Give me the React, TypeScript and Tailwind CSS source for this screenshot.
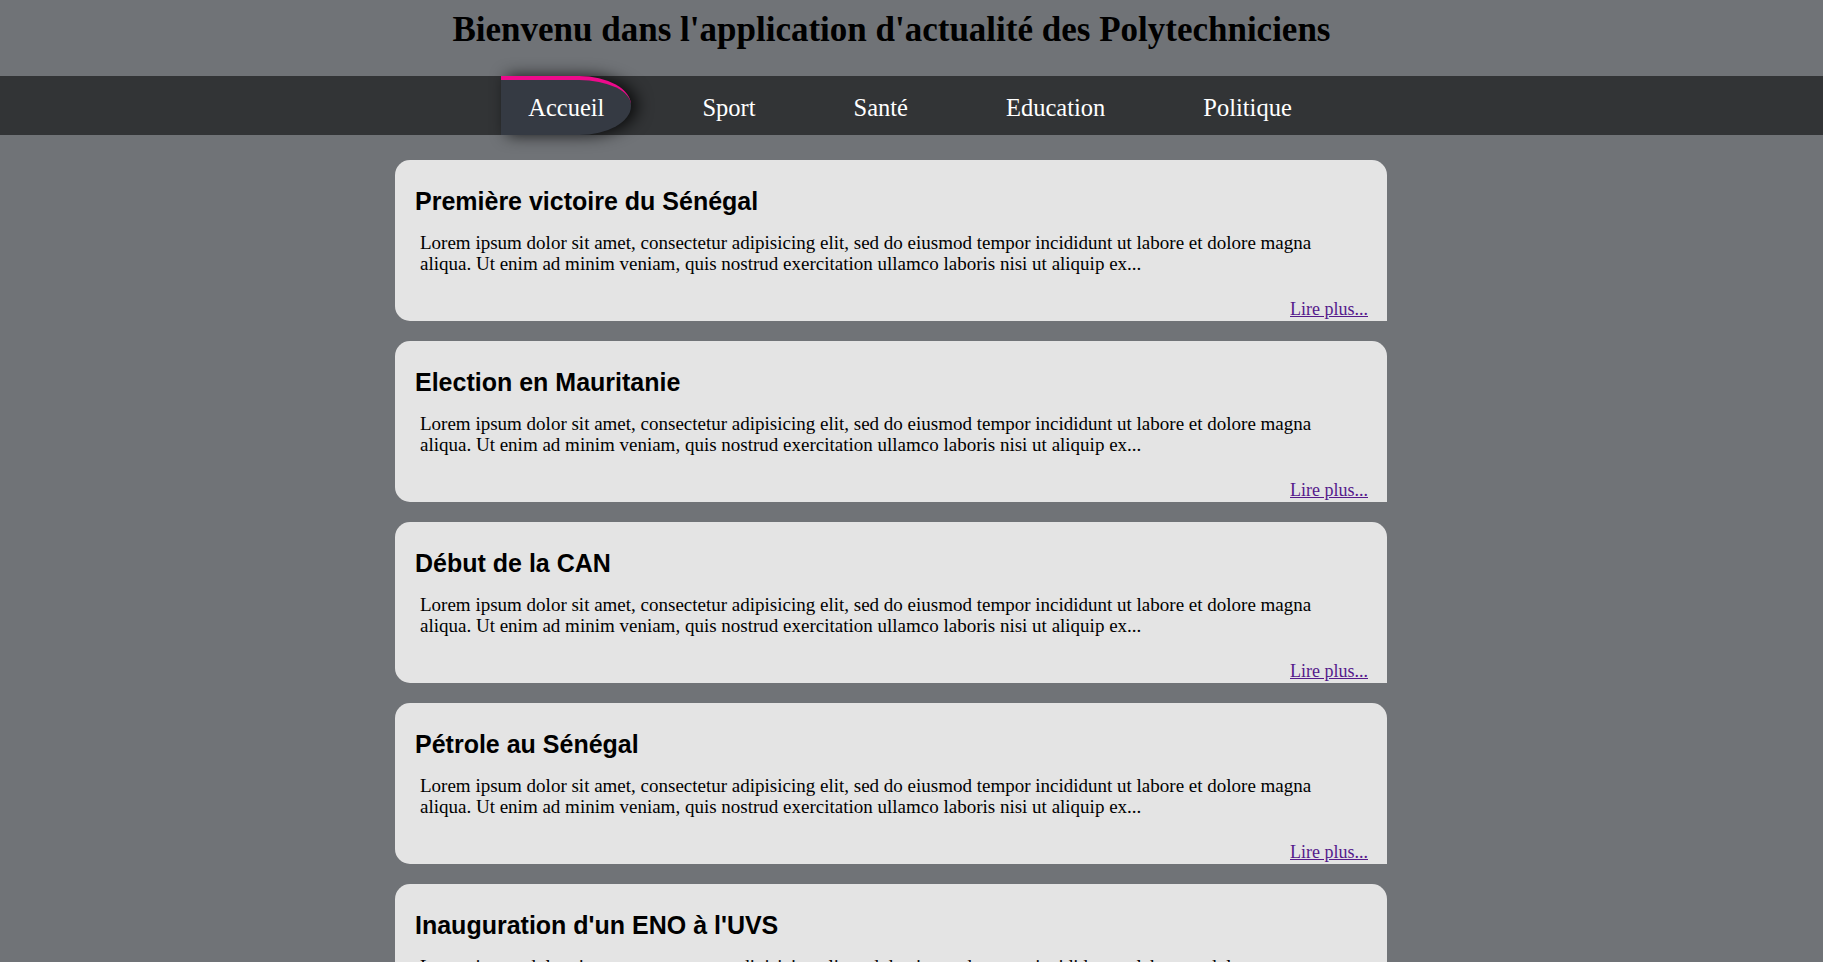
const articles = [
  { title: "Première victoire du Sénégal" },
  { title: "Election en Mauritanie" },
  { title: "Début de la CAN" },
  { title: "Pétrole au Sénégal" },
  { title: "Inauguration d'un ENO à l'UVS" },
  { title: "Rentrée universitaire à l'ESP" },
]

const lorem =
  "Lorem ipsum dolor sit amet, consectetur adipisicing elit, sed do eiusmod tempor incididunt ut labore et dolore magna aliqua. Ut enim ad minim veniam, quis nostrud exercitation ullamco laboris nisi ut aliquip ex..."

const menu = ["Accueil", "Sport", "Santé", "Education", "Politique"]

export default function App() {
  return (
    <div className="min-h-screen bg-[#707377] font-['Liberation_Serif',serif]">
      <header className="h-[76px] pt-[10px] pr-[40px] text-center">
        <h1 className="text-[35px] font-bold leading-[40px] text-black">
          Bienvenu dans l'application d'actualité des Polytechniciens
        </h1>
      </header>

      <nav className="flex h-[59px] justify-center gap-[44px] bg-[#323436] pr-[3px]">
        {menu.map((item, i) =>
          i === 0 ? (
            <a
              key={item}
              href="#"
              className="flex items-center rounded-r-[52px_29px] border-t-4 border-[#ee0a8c] bg-[#353a43] px-[27px] pt-[2px] text-[24.5px] text-white shadow-[6px_0_16px_rgba(0,0,0,0.8)]"
            >
              {item}
            </a>
          ) : (
            <a
              key={item}
              href="#"
              className="flex items-center px-[27px] pt-[6px] text-[24.5px] text-white"
            >
              {item}
            </a>
          )
        )}
      </nav>

      <div className="pr-[41px]">
        <main className="mx-auto flex w-[992px] flex-col gap-[20px] pt-[25px] pb-10">
          {articles.map((article) => (
            <article
              key={article.title}
              className="h-[161px] rounded-[15px] rounded-br-none bg-[#e4e4e4] pt-[27px] pr-[19px] pl-[20px]"
            >
              <h2 className="font-['Liberation_Sans',Arial,sans-serif] text-[25px] leading-[29px] font-bold text-black">
                {article.title}
              </h2>
              <p className="mt-[15.5px] mr-[6px] ml-[5px] text-[19px] leading-[21.8px] text-black">{lorem}</p>
              <div className="mt-[23.8px] text-right text-[18px] leading-[21px]">
                <a href="#" className="text-[#551a8b] underline">
                  Lire plus...
                </a>
              </div>
            </article>
          ))}
        </main>
      </div>
    </div>
  )
}
